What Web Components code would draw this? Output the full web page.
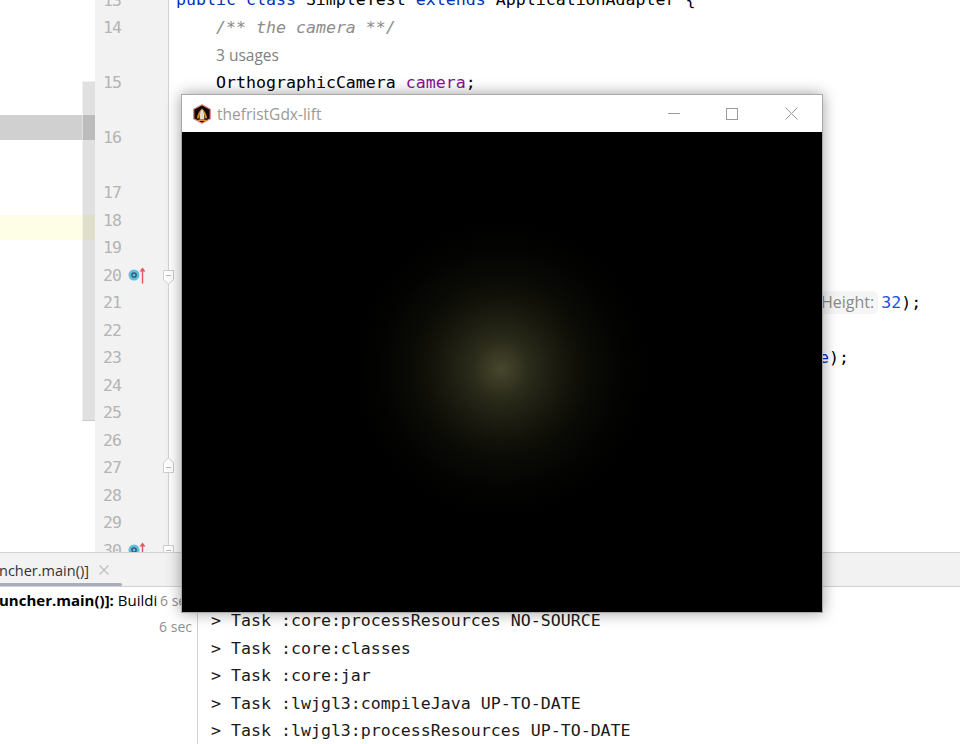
<!DOCTYPE html>
<html>
<head>
<meta charset="utf-8">
<title>SimpleTest</title>
<style>
  html, body { margin: 0; padding: 0; height: 100%; overflow: hidden; background: #fff; }
</style>
</head>
<body>
<ide-app>
  <code-line slot="code"><kw-t>public class</kw-t> SimpleTest <kw-t>extends</kw-t> ApplicationAdapter {</code-line>
  <code-line slot="code" indent><doc-t>/** the camera **/</doc-t></code-line>
  <code-line slot="code" indent><usage-t>3 usages</usage-t></code-line>
  <code-line slot="code" indent>OrthographicCamera <field-t>camera</field-t>;</code-line>
  <code-line slot="code"></code-line>
  <code-line slot="code"></code-line>
  <code-line slot="code"></code-line>
  <code-line slot="code"></code-line>
  <code-line slot="code"></code-line>
  <code-line slot="code"></code-line>
  <code-line slot="code"></code-line>
  <code-line slot="code" pad="652"><hint-t>Height:</hint-t><num-t>32</num-t>);</code-line>
  <code-line slot="code"></code-line>
  <code-line slot="code" pad="650"><kw-t>e</kw-t>);</code-line>
</ide-app>
<win-frame title-text="thefristGdx-lift"></win-frame>

<script>
// small inline text styles used inside code lines
function defineSpan(name, css) {
  customElements.define(name, class extends HTMLElement {
    constructor() {
      super()
      this.attachShadow({ mode: 'open' }).innerHTML = `<style>:host{${css}}</style><slot></slot>`
    }
  })
}
defineSpan('kw-t', 'color:#0033b3')
defineSpan('doc-t', 'color:#8c8c8c;font-style:italic')
defineSpan('field-t', 'color:#871094')
defineSpan('num-t', 'color:#1750eb')
defineSpan('usage-t', 'color:#7f7f7f;vertical-align:-1px;font:15.5px "Open Sans",sans-serif')
defineSpan('hint-t', 'display:inline-block;height:23px;color:#8a8a8a;background:#f5f5f5;border-radius:0 5px 5px 0;padding-right:4px;margin-right:3px;font:16px/23px "Open Sans",sans-serif')

class CodeLine extends HTMLElement {
  constructor() {
    super()
    // no whitespace in this template: the host is white-space: pre
    this.attachShadow({ mode: 'open' }).innerHTML = `<style>:host { display: block; height: 27.5px; line-height: 27.5px; white-space: pre; padding-left: 7px; } :host([indent]) { padding-left: 47px; }</style><slot></slot>`
    if (this.hasAttribute('pad')) this.style.paddingLeft = this.getAttribute('pad') + 'px'
  }
}
customElements.define('code-line', CodeLine)

// left project strip, only the last bit of it is on screen
class ProjectStrip extends HTMLElement {
  constructor() {
    super()
    this.attachShadow({ mode: 'open' }).innerHTML = `
      <style>
        :host { display: flex; flex-direction: column; width: 95px; flex: none; background: #fff; position: relative; }
        .spacer-a { height: 115px; }
        .sel { height: 25px; background: #d0d0d0; }
        .spacer-b { height: 75px; }
        .cur { height: 25px; background: #fefee6; }
        .thumb {
          position: absolute; left: 82px; top: 81px; width: 13px; height: 340px; box-sizing: border-box;
          background: rgba(120,120,120,.23); border: 1px solid rgba(255,255,255,.55); border-bottom-color: #c8c8c8; border-right: 0;
        }
      </style>
      <div class="spacer-a"></div>
      <div class="sel"></div>
      <div class="spacer-b"></div>
      <div class="cur"></div>
      <div class="thumb"></div>`
  }
}
customElements.define('project-strip', ProjectStrip)

const foldOpen = `<svg class="fold open" width="11" height="16" viewBox="0 0 11 16"><path d="M.5.5h10v9L5.500 14 .5 9.500z" fill="#fff" stroke="#cfcfcf"/><path d="M3 5.500h5" stroke="#b8b8b8"/></svg>`
const foldEnd = `<svg class="fold end" width="11" height="16" viewBox="0 0 11 16"><path d="M.5 15.500h10v-10L5.500 1 .5 5.500z" fill="#fff" stroke="#cfcfcf"/><path d="M3 10.500h5" stroke="#b8b8b8"/></svg>`
const marks = `<svg class="marks" width="20" height="18" viewBox="0 0 20 18">
  <circle cx="6" cy="8" r="5.500" fill="#62bde2"/><circle cx="6" cy="8" r="2.200" fill="none" stroke="#2f5266" stroke-width="1.300"/>
  <path d="M14.500 16.500V3" stroke="#e4545c" stroke-width="1.400"/><path d="M14.500 .5l3 4h-6z" fill="#e4545c"/></svg>`

class LineGutter extends HTMLElement {
  constructor() {
    super()
    // row per 27.5px slot, blank ones hold inlays in the editor
    const rows = [
      [13], [14], [], [15], [], [16], [], [17], [18], [19],
      [20, marks, foldOpen], [21], [22], [23], [24], [25], [26],
      [27, '', foldEnd], [28], [29], [30, marks, foldOpen]
    ]
    const html = rows.map(([n, icon, fold]) => `
      <div class="row"><span class="num">${n || ''}</span>${icon || ''}${fold || ''}</div>`).join('')
    this.attachShadow({ mode: 'open' }).innerHTML = `
      <style>
        :host { display: block; width: 73px; flex: none; background: #f2f2f2; border-right: 1px solid #d2d2d2; }
        .inner { margin-top: -13.5px; }
        .row { height: 27.5px; position: relative; display: flex; align-items: center; }
        .num { width: 25px; margin-left: 8px; font: 16.5px/27.5px "DejaVu Sans Mono", monospace; color: #b4b4b4; letter-spacing: -1px; }
        .marks { position: absolute; left: 33px; top: 5px; }
        .fold { position: absolute; left: 68px; }
        .fold.open { top: 8.500px; }
        .fold.end { top: 3px; }
      </style>
      <div class="inner">${html}</div>`
  }
}
customElements.define('line-gutter', LineGutter)

class ToolTabs extends HTMLElement {
  constructor() {
    super()
    this.attachShadow({ mode: 'open' }).innerHTML = `
      <style>
        :host { display: block; height: 35px; box-sizing: border-box; background: #f2f2f2; border-top: 1px solid #d1d1d1; border-bottom: 1px solid #d1d1d1; position: relative; }
        .tab { display: flex; align-items: center; gap: 10px; height: 33px; box-sizing: border-box; padding-top: 1px; width: 122px; overflow: hidden; font: 14.5px "Open Sans", sans-serif; color: #333; white-space: nowrap; }
        .tab span { margin-left: -1px; }
        .bar { position: absolute; left: 0; bottom: 0; width: 122px; height: 3px; background: #a9adbc; border-radius: 0 2px 2px 0; }
      </style>
      <div class="tab"><span>ncher.main()]</span>
        <svg width="10" height="10" viewBox="0 0 10 10"><path d="M.5.5l9 9M9.500.5l-9 9" stroke="#bdbdbd" stroke-width="1.100"/></svg>
      </div>
      <div class="bar"></div>`
  }
}
customElements.define('tool-tabs', ToolTabs)

class BuildTree extends HTMLElement {
  constructor() {
    super()
    this.attachShadow({ mode: 'open' }).innerHTML = `
      <style>
        :host { display: block; width: 197px; flex: none; border-right: 1px solid #d2d2d2; font: 15px "Open Sans", sans-serif; background: #fff; }
        .row { display: flex; height: 26px; align-items: center; white-space: nowrap; color: #000; }
        .name { width: 160px; overflow: hidden; flex: none; }
        .name b { margin-left: -1px; }
        .time { color: #8f8f8f; margin-left: auto; padding-right: 5px; font-size: 14px; }
      </style>
      <div class="row"><span class="name"><b>uncher.main()]:</b> Buildi</span><span class="time">6 sec</span></div>
      <div class="row"><span class="time">6 sec</span></div>`
  }
}
customElements.define('build-tree', BuildTree)

class BuildConsole extends HTMLElement {
  constructor() {
    super()
    const lines = [
      '&gt; Task :core:processResources NO-SOURCE',
      '&gt; Task :core:classes',
      '&gt; Task :core:jar',
      '&gt; Task :lwjgl3:compileJava UP-TO-DATE',
      '&gt; Task :lwjgl3:processResources UP-TO-DATE'
    ]
    this.attachShadow({ mode: 'open' }).innerHTML = `
      <style>
        :host { display: block; flex: 1; padding: 20px 0 0 13px; font: 16.6px "DejaVu Sans Mono", monospace; color: #1a1a1a; overflow: hidden; }
        div { height: 27.5px; line-height: 27.5px; white-space: pre; }
      </style>
      ${lines.map(l => `<div>${l}</div>`).join('')}`
  }
}
customElements.define('build-console', BuildConsole)

class IdeApp extends HTMLElement {
  constructor() {
    super()
    this.attachShadow({ mode: 'open' }).innerHTML = `
      <style>
        :host { display: grid; grid-template-rows: 552px 35px 1fr; width: 960px; height: 744px; overflow: hidden; background: #fff; }
        .editor { display: flex; overflow: hidden; }
        .code { flex: 1; margin-top: -13.75px; font: 16.6px "DejaVu Sans Mono", monospace; color: #000; }
        .bottom { display: flex; overflow: hidden; }
      </style>
      <div class="editor">
        <project-strip></project-strip>
        <line-gutter></line-gutter>
        <div class="code"><slot name="code"></slot></div>
      </div>
      <tool-tabs></tool-tabs>
      <div class="bottom">
        <build-tree></build-tree>
        <build-console></build-console>
      </div>`
  }
}
customElements.define('ide-app', IdeApp)

// the game window floats over the IDE
class WinFrame extends HTMLElement {
  constructor() {
    super()
    this.attachShadow({ mode: 'open' }).innerHTML = `
      <style>
        :host { position: absolute; left: 181px; top: 94px; width: 642px; height: 519px; box-sizing: border-box; display: flex; flex-direction: column;
          border: 1px solid #a9a9a9; box-shadow: 0 0 14px rgba(0,0,0,.38); background: #000; }
        .bar { height: 37px; flex: none; display: flex; align-items: center; background: #fff; padding-left: 10px; }
        .title { margin-left: 5px; font: 15.5px "Open Sans", sans-serif; color: #9a9a9a; flex: 1; }
        .btns { display: flex; align-items: center; }
        .btns svg { display: block; }
        .game { flex: 1; background: radial-gradient(circle 152px at 319px 237px, #47472e 0, #3a3a24 9%, #2c2c1b 18%, #1e1e12 32%, #121209 47%, #090905 62%, #030302 80%, #000 100%); }
      </style>
      <div class="bar">
        <svg width="20" height="20" viewBox="0 0 20 20">
          <path d="M10 .7l8.300 4.600v9.400L10 19.300 1.700 14.700V5.300z" fill="#0c0c0c" stroke="#f0857a" stroke-width="1.300" stroke-linejoin="round"/>
          <path d="M4.800 14.800c.4-4 2-7.300 5.200-10.300 3.200 3 4.800 6.300 5.200 10.300l-2.200-.8c-.3-2.700-1.300-5-3-7-1.700 2-2.700 4.300-3 7z" fill="#d98a1f"/>
          <path d="M10 5.500c1.700 2 2.300 4.300 2.300 6.700v3.300H7.700v-3.300c0-2.400.6-4.700 2.300-6.700z" fill="#e6dcc6"/>
          <path d="M6 16.300h8" stroke="#e8a13a" stroke-width="1.200"/>
        </svg>
        <span class="title">${this.getAttribute('title-text')}</span>
        <div class="btns">
          <svg width="12" height="1" viewBox="0 0 12 1" style="margin-right:46px;margin-top:-1px"><path d="M0 .5h12" stroke="#9a9a9a"/></svg>
          <svg width="12" height="12" viewBox="0 0 12 12" style="margin-right:47px"><rect x=".5" y=".5" width="11" height="11" fill="none" stroke="#9a9a9a"/></svg>
          <svg width="13" height="13" viewBox="0 0 13 13" style="margin-right:24px"><path d="M.5.5l12 12M12.500.5l-12 12" stroke="#9a9a9a"/></svg>
        </div>
      </div>
      <div class="game"></div>`
  }
}
customElements.define('win-frame', WinFrame)
</script>
</body>
</html>
